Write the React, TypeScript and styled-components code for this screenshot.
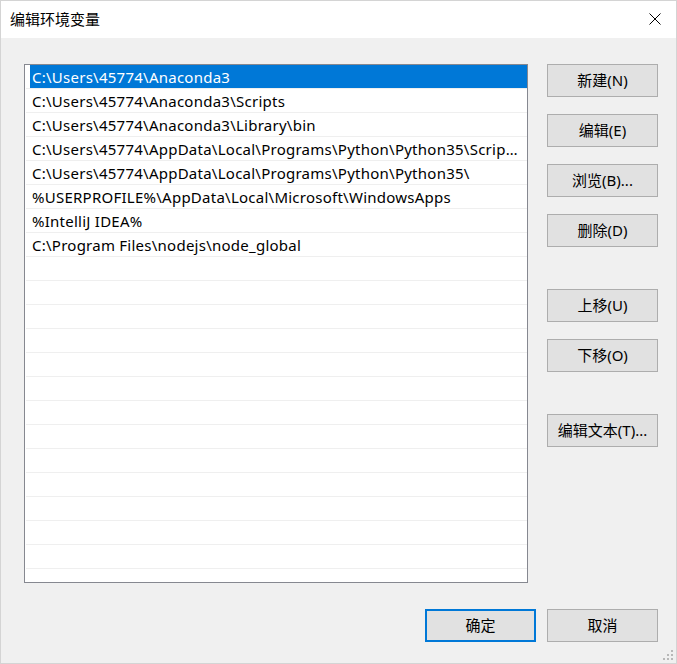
import React from 'react';
import styled, { createGlobalStyle } from 'styled-components';

const GlobalStyle = createGlobalStyle`
html, body {
margin: 0;
padding: 0;
background: #f0f0f0;
}
body {
font-family: "Noto Sans", "Noto Sans CJK SC", sans-serif;
font-size: 15px;
color: #000;
}
`

const paths = [
    'C:\\Users\\45774\\Anaconda3',
    'C:\\Users\\45774\\Anaconda3\\Scripts',
    'C:\\Users\\45774\\Anaconda3\\Library\\bin',
    'C:\\Users\\45774\\AppData\\Local\\Programs\\Python\\Python35\\Scripts\\',
    'C:\\Users\\45774\\AppData\\Local\\Programs\\Python\\Python35\\',
    '%USERPROFILE%\\AppData\\Local\\Microsoft\\WindowsApps',
    '%IntelliJ IDEA%',
    'C:\\Program Files\\nodejs\\node_global',
];

const TOTAL_ROWS = 22;

export default function App() {
    const rows = Array.from({ length: TOTAL_ROWS }, (_, i) => paths[i] || '');

    return <>
        <GlobalStyle />
        <Window>
            <TitleBar>
                <Title>编辑环境变量</Title>
                <CloseButton aria-label="关闭">
                    <svg width="12" height="12" viewBox="0 0 12 12">
                        <path d="M0.5 0.5 L11.5 11.5 M11.5 0.5 L0.5 11.5" stroke="#000" strokeWidth="1" fill="none" />
                    </svg>
                </CloseButton>
            </TitleBar>
            <Body>
                <Main>
                    <List>
                        {rows.map((text, i) =>
                            <Row key={i}>
                                <Label selected={i === 0}>{text}</Label>
                            </Row>
                        )}
                    </List>
                    <Side>
                        <Button>新建(N)</Button>
                        <Button>编辑(E)</Button>
                        <Button>浏览(B)...</Button>
                        <Button>删除(D)</Button>
                        <Button spaced>上移(U)</Button>
                        <Button>下移(O)</Button>
                        <Button spaced>编辑文本(T)...</Button>
                    </Side>
                </Main>
                <Footer>
                    <Button primary>确定</Button>
                    <Button>取消</Button>
                </Footer>
            </Body>
            <Grip width="12" height="12" viewBox="0 0 12 12">
                <rect x="9" y="1" width="2" height="2" fill="#b8b8b8" />
                <rect x="5" y="5" width="2" height="2" fill="#b8b8b8" />
                <rect x="9" y="5" width="2" height="2" fill="#b8b8b8" />
                <rect x="1" y="9" width="2" height="2" fill="#b8b8b8" />
                <rect x="5" y="9" width="2" height="2" fill="#b8b8b8" />
                <rect x="9" y="9" width="2" height="2" fill="#b8b8b8" />
            </Grip>
        </Window>
    </>
}

const Window = styled.div`
position: relative;
box-sizing: border-box;
width: 677px;
height: 664px;
border: 1px solid #d4d4d4;
background: #f0f0f0;
display: flex;
flex-direction: column;
overflow: hidden;
`

const TitleBar = styled.div`
height: 37px;
background: #fff;
display: flex;
align-items: center;
justify-content: space-between;
padding: 0 15px 0 9px;
flex-shrink: 0;
`

const Title = styled.div`
font-family: "Noto Sans CJK SC", sans-serif;
font-size: 15px;
line-height: 20px;
margin-top: -1px;
`

const CloseButton = styled.div`
width: 12px;
height: 12px;
display: flex;
margin-top: -1px;
`

const Body = styled.div`
flex: 1;
display: flex;
flex-direction: column;
padding: 26px 18px 21px 23px;
`

const Main = styled.div`
display: flex;
gap: 19px;
`

const List = styled.div`
box-sizing: border-box;
width: 504px;
height: 519px;
border: 1px solid #868890;
background: #fff;
overflow: hidden;
flex-shrink: 0;
`

const Row = styled.div`
height: 23px;
margin-left: 1px;
border-bottom: 1px solid #efefef;
display: flex;
`

const Label = styled.div<{ selected?: boolean }>`
flex: 1;
min-width: 0;
margin-left: 4px;
padding: 1px 5px 0 2px;
line-height: 22px;
letter-spacing: 0.25px;
white-space: nowrap;
overflow: hidden;
text-overflow: ellipsis;
background: ${props => props.selected ? '#0078d7' : 'transparent'};
color: ${props => props.selected ? '#fff' : '#000'};
`

const Side = styled.div`
display: flex;
flex-direction: column;
gap: 17px;
`

const Button = styled.div<{ primary?: boolean; spaced?: boolean }>`
box-sizing: border-box;
width: 111px;
height: 33px;
display: flex;
align-items: center;
justify-content: center;
padding-bottom: 2px;
line-height: 20px;
background: #e1e1e1;
border: ${props => props.primary ? '2px solid #0078d7' : '1px solid #adadad'};
margin-top: ${props => props.spaced ? '25px' : '0'};
font-size: 15px;
white-space: nowrap;
`

const Footer = styled.div`
display: flex;
justify-content: flex-end;
gap: 11px;
margin-top: 26px;
`

const Grip = styled.svg`
position: absolute;
right: 2px;
bottom: 2px;
`
